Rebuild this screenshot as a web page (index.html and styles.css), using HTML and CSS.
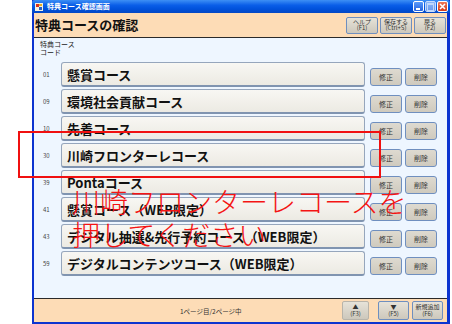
FILE: index.html
```html
<!DOCTYPE html>
<html lang="ja">
<head>
  <meta charset="UTF-8">
  <title>特典コース確認画面</title>
  <link rel="stylesheet" href="styles.css">
</head>
<body>
  <div class="screen">
    <div class="window">
      <div class="titlebar">
        <svg class="app-icon" width="8" height="8" viewBox="0 0 8 8">
          <rect x="0" y="0" width="8" height="8" fill="#f4f0e0"/>
          <rect x="1" y="1" width="3" height="3" fill="#d83020"/>
          <rect x="4" y="4" width="3" height="3" fill="#2860c8"/>
          <rect x="4" y="1" width="3" height="2" fill="#e8b020"/>
        </svg>
        <span class="title-text">特典コース確認画面</span>
        <div class="win-controls">
          <span class="wc wc-min"><i></i></span>
          <span class="wc wc-max"><i></i></span>
          <span class="wc wc-close">
            <svg width="7" height="7" viewBox="0 0 7 7"><path d="M1 1L6 6M6 1L1 6" stroke="#fff" stroke-width="1.6"/></svg>
          </span>
        </div>
      </div>

      <div class="header">
        <h1>特典コースの確認</h1>
        <div class="head-buttons">
          <button class="tool-btn">ヘルプ<br>(F1)</button>
          <button class="tool-btn">保存する<br>(Ctrl+S)</button>
          <button class="tool-btn">戻る<br>(F2)</button>
        </div>
      </div>

      <div class="content">
        <div class="col-head">特典コース<br>コード</div>
        <ul class="course-list">
          <li class="course-row"><span class="code">01</span><div class="course-name">懸賞コース</div><button class="row-btn">修正</button><button class="row-btn">削除</button></li>
          <li class="course-row"><span class="code">09</span><div class="course-name">環境社会貢献コース</div><button class="row-btn">修正</button><button class="row-btn">削除</button></li>
          <li class="course-row"><span class="code">10</span><div class="course-name">先着コース</div><button class="row-btn">修正</button><button class="row-btn">削除</button></li>
          <li class="course-row"><span class="code">30</span><div class="course-name">川崎フロンターレコース</div><button class="row-btn">修正</button><button class="row-btn">削除</button></li>
          <li class="course-row"><span class="code">39</span><div class="course-name">Pontaコース</div><button class="row-btn">修正</button><button class="row-btn">削除</button></li>
          <li class="course-row"><span class="code">41</span><div class="course-name">懸賞コース（WEB限定）</div><button class="row-btn">修正</button><button class="row-btn">削除</button></li>
          <li class="course-row"><span class="code">43</span><div class="course-name">デジタル抽選&amp;先行予約コース（WEB限定）</div><button class="row-btn">修正</button><button class="row-btn">削除</button></li>
          <li class="course-row"><span class="code">59</span><div class="course-name">デジタルコンテンツコース（WEB限定）</div><button class="row-btn">修正</button><button class="row-btn">削除</button></li>
        </ul>
      </div>

      <div class="footer">
        <span class="page-info">1ページ目/2ページ中</span>
        <div class="foot-buttons">
          <button class="tool-btn flat">▲<br>(F3)</button>
          <button class="tool-btn">▼<br>(F5)</button>
          <button class="tool-btn">新規追加<br>(F6)</button>
        </div>
      </div>
    </div>

    <div class="note-box"></div>
    <p class="note">川崎フロンターレコースを<br>押してください</p>
  </div>
</body>
</html>
```

FILE: styles.css
```css
body {
  margin: 0;
  background-color: #fff;
  font-family: "Noto Sans CJK JP", "Liberation Sans", sans-serif;
}
.screen {
  position: relative;
  width: 452px;
  height: 324px;
  overflow: hidden;
  padding-left: 32px;
  box-sizing: border-box;
}
.window {
  width: 418px;
  height: 324px;
  display: flex;
  flex-direction: column;
  background-color: #0c34d0;
  box-sizing: border-box;
  padding: 0 3px 2px 2px;
}

/* title bar */
.titlebar {
  height: 13px;
  margin: 0 -3px 0 -2px;
  display: flex;
  align-items: center;
  padding: 0 2px 0 3px;
  background: linear-gradient(#3d8ff5, #0a5ee8 40%, #0051db 70%, #0548c4);
  border-radius: 3px 3px 0 0;
}
.app-icon {
  flex: none;
}
.title-text {
  margin-left: 4px;
  font-size: 7px;
  font-weight: bold;
  color: #fff;
  line-height: 1;
}
.win-controls {
  margin-left: auto;
  display: flex;
  gap: 1px;
}
.wc {
  width: 11px;
  height: 11px;
  box-sizing: border-box;
  border: 1px solid #fff;
  border-radius: 2px;
  background: linear-gradient(#5a9af8, #2462e0);
  display: flex;
  align-items: center;
  justify-content: center;
  position: relative;
}
.wc-min i {
  width: 4px;
  height: 2px;
  background: #fff;
  margin-top: 4px;
  margin-right: 2px;
}
.wc-max {
  background: linear-gradient(#8ab6f8, #6a98ec);
  border-color: #c8dcfc;
}
.wc-max i {
  width: 5px;
  height: 5px;
  border: 1px solid #c0d6fa;
  border-top-width: 2px;
}
.wc-close {
  background: linear-gradient(#ee7858, #d63a18);
}

/* header */
.header {
  height: 24px;
  display: flex;
  align-items: center;
  background-color: #fddcb6;
  border-bottom: 1px solid #2a2a2a;
}
.header h1 {
  margin: 0 0 0 1px;
  font-size: 13px;
  font-weight: bold;
  color: #111;
  line-height: 1;
  padding-bottom: 2px;
}
.head-buttons {
  margin-left: auto;
  display: flex;
  gap: 2px;
  padding-right: 1px;
}
.tool-btn {
  width: 32px;
  height: 17px;
  padding: 0;
  font-family: "Noto Sans CJK JP", "Liberation Sans", sans-serif;
  font-size: 6px;
  line-height: 6.5px;
  color: #333;
  background: linear-gradient(#e6e2d8, #cdc8bc);
  border: 1px solid #6f8fbf;
  border-radius: 2px;
}

/* course list */
.content {
  flex: 1;
  background-color: #eef6ff;
  padding: 2px 9px 0 0;
}
.col-head {
  margin-left: 6px;
  font-size: 7px;
  line-height: 8px;
  color: #222;
  height: 22px;
}
.course-list {
  list-style: none;
  margin: 0;
  padding: 0;
  display: flex;
  flex-direction: column;
  gap: 2px;
}
.course-row {
  height: 25px;
  display: flex;
  align-items: center;
}
.code {
  width: 27px;
  padding-left: 9px;
  box-sizing: border-box;
  font-size: 6px;
  color: #444;
}
.course-name {
  width: 304px;
  height: 25px;
  box-sizing: border-box;
  padding-left: 5px;
  display: flex;
  align-items: center;
  font-size: 13px;
  font-weight: bold;
  color: #111;
  white-space: nowrap;
  overflow: hidden;
  background: linear-gradient(#f8f7f3, #eceae3);
  border: 1px solid #96a6bc;
  border-bottom: 2px solid #8094b0;
  border-radius: 3px;
}
.row-btn {
  width: 32px;
  height: 18px;
  margin-left: 3px;
  margin-top: 4px;
  padding: 0;
  font-family: "Noto Sans CJK JP", "Liberation Sans", sans-serif;
  font-size: 7px;
  color: #333;
  background: linear-gradient(#dedad0, #cfcabe);
  border: 1px solid #6f8fbf;
  border-radius: 3px;
}
.course-name + .row-btn {
  margin-left: 5px;
}

/* footer */
.footer {
  height: 23px;
  display: flex;
  align-items: center;
  background-color: #fddcb6;
  border-top: 1px solid #2a2a2a;
}
.page-info {
  margin-left: 146px;
  font-size: 6.5px;
  color: #333;
}
.foot-buttons {
  margin-left: auto;
  display: flex;
  gap: 3px;
  padding-right: 4px;
}
.foot-buttons .tool-btn {
  height: 19px;
  width: 31px;
}
.tool-btn.flat {
  width: 27px;
  margin-right: 6px;
  border-color: #b8b4aa;
}

/* red annotation */
.note-box {
  position: absolute;
  left: 18px;
  top: 131px;
  width: 363px;
  height: 47px;
  box-sizing: border-box;
  border: 2px solid #f01010;
}
.note {
  position: absolute;
  left: 72px;
  top: 185px;
  margin: 0;
  font-size: 28px;
  font-weight: 300;
  line-height: 33px;
  color: #f41414;
  white-space: nowrap;
}
```
